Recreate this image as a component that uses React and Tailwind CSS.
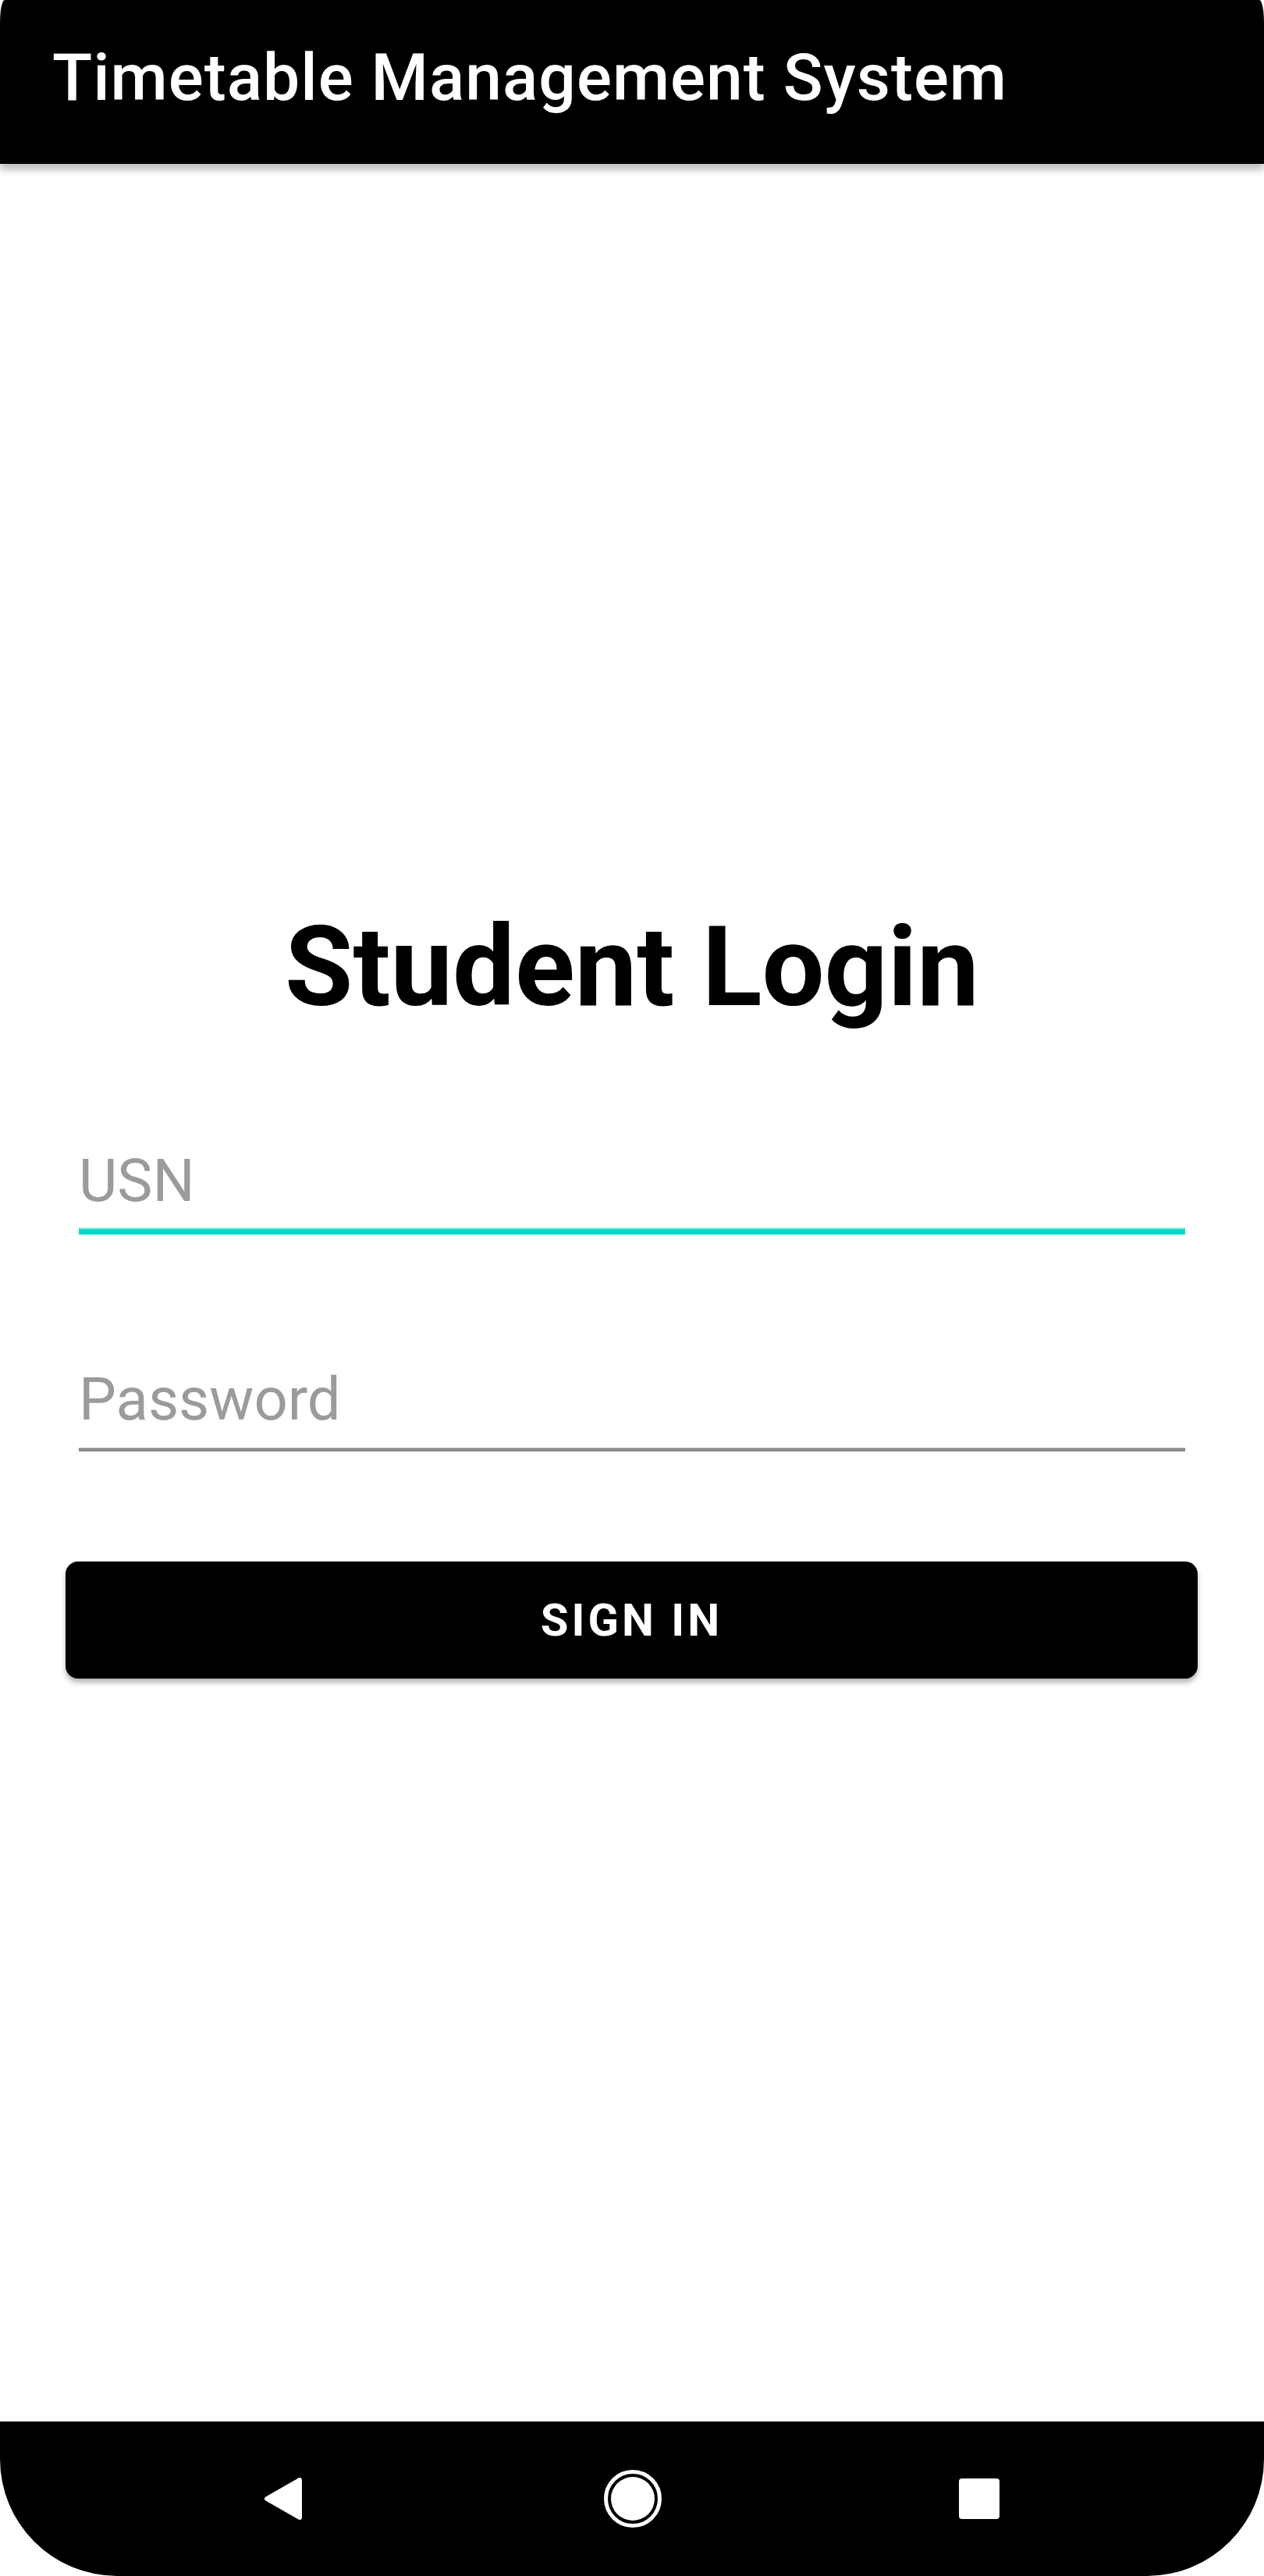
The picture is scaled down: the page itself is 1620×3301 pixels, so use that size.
import { useState } from "react";

function NavBar() {
  return (
    <div className="h-[198px] bg-black rounded-b-[150px] flex items-center pl-[339px]">
      <svg width="48" height="54" viewBox="0 0 48 54">
        <polygon
          points="45,3 45,51 3,27"
          fill="white"
          stroke="white"
          strokeWidth="6"
          strokeLinejoin="round"
        />
      </svg>
      <svg width="74" height="74" viewBox="0 0 74 74" className="ml-[387px]">
        <circle cx="37" cy="37" r="34.5" fill="none" stroke="white" strokeWidth="5" />
        <circle cx="37" cy="37" r="28" fill="white" />
      </svg>
      <div className="ml-[381px] w-[52px] h-[52px] rounded-[4px] bg-white" />
    </div>
  );
}

export default function App() {
  const [usn, setUsn] = useState("");
  const [password, setPassword] = useState("");

  return (
    <div className="w-[1620px] h-[3301px] bg-white flex flex-col font-['Roboto',sans-serif]">
      <header className="relative z-10 h-[210px] shrink-0 bg-black rounded-tl-[6px_30px] rounded-tr-[6px_30px] shadow-[0_8px_10px_rgba(0,0,0,0.25)] pl-[67px] pt-[58px]">
        <h1 className="text-white text-[84px] leading-none font-medium tracking-[1px]">
          Timetable Management System
        </h1>
      </header>

      <main className="flex-1 flex flex-col">
        <h2 className="mt-[959px] text-center text-black text-[142px] leading-none font-bold">
          Student Login
        </h2>

        <div className="mt-[164px] px-[101px]">
          <input
            value={usn}
            onChange={(e) => setUsn(e.target.value)}
            placeholder="USN"
            className="block w-full h-[76px] p-0 bg-transparent outline-none text-[76px] leading-none text-black placeholder:text-[#9b9b9b]"
          />
          <div className="mt-[22px] h-[2px] bg-[#96ece4]" />
          <div className="h-[7px] bg-[#03dac5]" />
        </div>

        <div className="mt-[173px] px-[101px]">
          <input
            type="password"
            value={password}
            onChange={(e) => setPassword(e.target.value)}
            placeholder="Password"
            className="block w-full h-[76px] p-0 bg-transparent outline-none text-[76px] leading-none text-black placeholder:text-[#9b9b9b]"
          />
          <div className="mt-[24px] h-[1px] bg-[#b8b8b8]" />
          <div className="h-[4px] bg-[#8a8a8a]" />
        </div>

        <div className="mt-[141px] pl-[84px] pr-[85px]">
          <button className="w-full h-[150px] rounded-[16px] bg-black text-white text-[58px] font-bold tracking-[4px] shadow-[0_5px_7px_rgba(0,0,0,0.3)] flex items-center justify-center">
            SIGN IN
          </button>
        </div>
      </main>

      <NavBar />
    </div>
  );
}
